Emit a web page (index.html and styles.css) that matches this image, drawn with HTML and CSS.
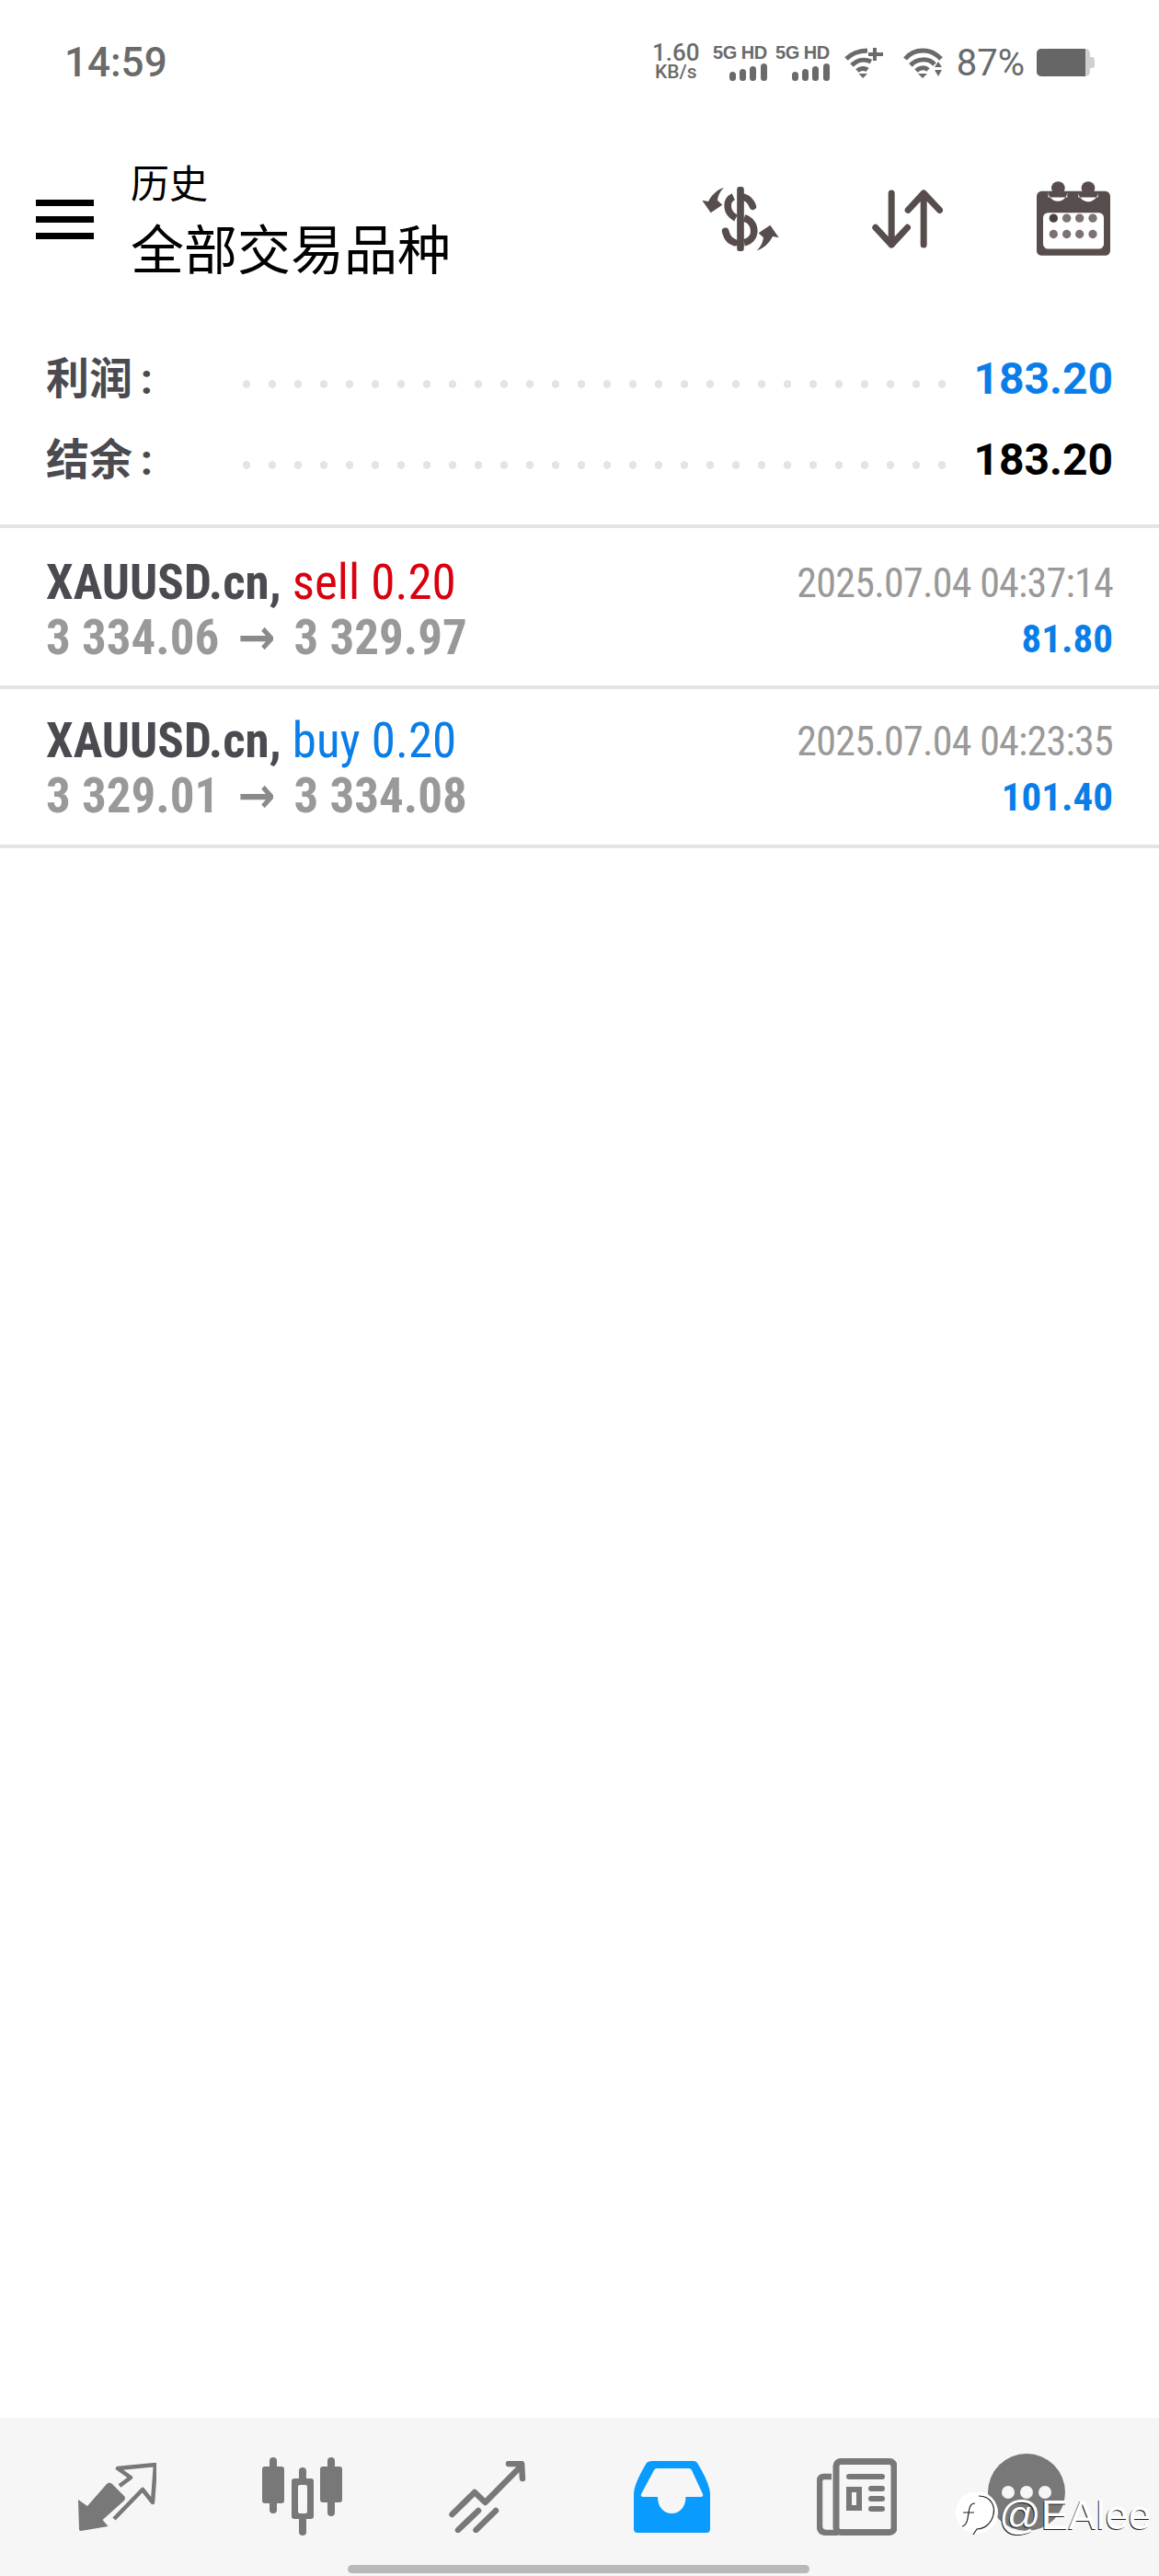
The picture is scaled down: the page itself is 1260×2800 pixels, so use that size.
FILE: index.html
```html
<!DOCTYPE html>
<html lang="zh">
<head>
    <meta charset="utf-8">
    <title>历史</title>
    <link rel="stylesheet" href="styles.css">
</head>
<body>

<div class="page">
    <!-- Status bar -->
    <div class="status">
        <span class="clock">14:59</span>
        <div class="status-right">
            <div class="speed"><b>1.60</b><span>KB/s</span></div>
            <div class="sim">
                <span>5G HD</span>
                <svg class="bars" viewBox="0 0 41 19"><rect x="0" y="9" width="7" height="10" rx="3.5"/><rect x="11" y="6" width="7" height="13" rx="3.5"/><rect x="22" y="3" width="7" height="16" rx="3.5"/><rect x="34" y="0" width="7" height="19" rx="3.5"/></svg>
            </div>
            <div class="sim">
                <span>5G HD</span>
                <svg class="bars" viewBox="0 0 41 19"><rect x="0" y="9" width="7" height="10" rx="3.5"/><rect x="11" y="6" width="7" height="13" rx="3.5"/><rect x="22" y="3" width="7" height="16" rx="3.5"/><rect x="34" y="0" width="7" height="19" rx="3.5"/></svg>
            </div>
            <svg class="wifi wifi-plus" viewBox="0 0 42 33">
                <g fill="none" stroke="#6a6a6a" stroke-width="5">
                    <path d="M2 12C8 6 14 3.500 25 3"/>
                    <path d="M8 19C14 13 22 11.500 29 15"/>
                    <path d="M14 25C17 22 22 21.500 25 24"/>
                </g>
                <path d="M15.500 28H25L20.200 33Z" fill="#6a6a6a"/>
                <path d="M33 0V14M26 7H42" fill="none" stroke="#6a6a6a" stroke-width="4"/>
            </svg>
            <svg class="wifi" viewBox="0 0 43 33">
                <g fill="none" stroke="#6a6a6a" stroke-width="5">
                    <path d="M2 12C12 0 30 0 41 12"/>
                    <path d="M8 19C15 11 28 11 34 18"/>
                    <path d="M14 25C18 21 24 21 27 24"/>
                </g>
                <path d="M16 28H26L21 33Z" fill="#6a6a6a"/>
                <path d="M38 15L42 21H34ZM34 24H42L38 31Z" fill="#6a6a6a"/>
            </svg>
            <span class="percent">87%</span>
            <svg class="battery" viewBox="0 0 63 30">
                <rect x="0" y="0" width="58" height="30" rx="5" fill="#cfcfcf"/>
                <path d="M5 0H53V30H5A5 5 0 0 1 0 25V5A5 5 0 0 1 5 0Z" fill="#666"/>
                <path d="M58 9H60A3 3 0 0 1 63 12V18A3 3 0 0 1 60 21H58Z" fill="#cfcfcf"/>
            </svg>
        </div>
    </div>

    <!-- Toolbar -->
    <header class="toolbar">
        <div class="burger"><i></i><i></i><i></i></div>
        <div class="titles">
            <div class="title-small">历史</div>
            <div class="title-big">全部交易品种</div>
        </div>
        <svg class="tool tool-dollar" viewBox="70 68 250 210">
            <g fill="none" stroke="#574d4d" stroke-width="23" stroke-linecap="round">
                <path d="M195 78V268"/>
                <path d="M172 100C146 112 146 152 180 170" stroke-linecap="butt"/>
                <path d="M207 102C220 106 230 118 235 132"/>
                <path d="M207 170C250 182 250 242 207 250" stroke-linecap="butt"/>
                <path d="M146 213C150 232 160 245 176 250"/>
            </g>
            <path d="M142 70C128 82 122 98 120 112L136 127L98 153L70 112L90 116C102 92 122 76 142 70Z" fill="#574d4d"/>
            <path d="M142 70C128 82 122 98 120 112L136 127L98 153L70 112L90 116C102 92 122 76 142 70Z" fill="#574d4d" transform="rotate(180 195 173)"/>
        </svg>
        <svg class="tool tool-sort" viewBox="625 78 230 192">
            <g fill="none" stroke="#574d4d" stroke-width="21" stroke-linecap="round" stroke-linejoin="round">
                <path d="M688 90V258M636 202L688 258L740 202"/>
                <path d="M793 258V90M742 145L793 90L845 145"/>
            </g>
        </svg>
        <svg class="tool tool-cal" viewBox="1162 48 240 242">
            <rect x="1162" y="80" width="240" height="210" rx="16" fill="#574d4d"/>
            <rect x="1183" y="150" width="198" height="118" rx="16" fill="#fff"/>
            <path d="M1200 80A30 30 0 0 0 1262 84V100H1200ZM1298 80A30 30 0 0 0 1362 84V100H1298Z" fill="#fff"/>
            <circle cx="1232" cy="70" r="22" fill="#574d4d"/>
            <circle cx="1330" cy="70" r="22" fill="#574d4d"/>
            <circle cx="1217" cy="168" r="14" fill="#4a4040"/>
            <g fill="#7d7272">
                <circle cx="1260" cy="168" r="14"/><circle cx="1302" cy="168" r="14"/><circle cx="1345" cy="168" r="14"/>
                <circle cx="1217" cy="220" r="14"/><circle cx="1260" cy="220" r="14"/><circle cx="1302" cy="220" r="14"/><circle cx="1345" cy="220" r="14"/>
            </g>
        </svg>
    </header>

    <!-- Totals -->
    <section class="summary">
        <div class="sum-row">
            <span class="sum-label">利润 :</span>
            <span class="sum-dots"></span>
            <span class="sum-value blue">183.20</span>
        </div>
        <div class="sum-row">
            <span class="sum-label">结余 :</span>
            <span class="sum-dots"></span>
            <span class="sum-value">183.20</span>
        </div>
    </section>

    <!-- Deals -->
    <section class="deals">
        <div class="deal">
            <div class="deal-left">
                <div class="deal-name"><b>XAUUSD.cn,</b> <span class="red">sell 0.20</span></div>
                <div class="deal-price">3 334.06 <span class="arrow">→</span> 3 329.97</div>
            </div>
            <div class="deal-right">
                <div class="deal-time">2025.07.04 04:37:14</div>
                <div class="deal-profit blue">81.80</div>
            </div>
        </div>
        <div class="deal deal-short">
            <div class="deal-left">
                <div class="deal-name"><b>XAUUSD.cn,</b> <span class="blue">buy 0.20</span></div>
                <div class="deal-price">3 329.01 <span class="arrow">→</span> 3 334.08</div>
            </div>
            <div class="deal-right">
                <div class="deal-time">2025.07.04 04:23:35</div>
                <div class="deal-profit blue">101.40</div>
            </div>
        </div>
    </section>

    <!-- Bottom navigation -->
    <nav class="tabs">
        <svg class="tab tab-trade" viewBox="86 77 85 75">
            <path d="M86 117L96 124L117 100Q120 97 123 100L136 113Q138 115 136 118L112.500 139L118.500 146L89 151Q87 151.500 87 149Z" fill="#787878"/>
            <path d="M131 102L143 93L129 83L170 79L167 120L156 106L125 138" fill="none" stroke="#787878" stroke-width="4.500" stroke-linejoin="round"/>
        </svg>
        <svg class="tab tab-candles" viewBox="285 71 87 86">
            <g fill="#787878">
                <rect x="293" y="71" width="8" height="61" rx="4"/><rect x="285" y="81" width="24" height="40" rx="3"/>
                <rect x="325" y="82" width="8" height="74" rx="4"/>
                <rect x="317" y="94" width="24" height="44" rx="3"/>
                <rect x="356" y="71" width="8" height="64" rx="4"/><rect x="348" y="81" width="24" height="39" rx="3"/>
            </g>
            <rect x="324" y="101" width="10" height="31" rx="2" fill="#f6f6f6"/>
        </svg>
        <svg class="tab tab-chart" viewBox="488 73 84 78">
            <g fill="none" stroke="#787878" stroke-width="6.500" stroke-linecap="round" stroke-linejoin="round">
                <path d="M491.500 131L516 107L527.500 118L567 78"/>
                <path d="M553 76H567L568 92"/>
                <path d="M520 127L498 148M539 127L517.500 148"/>
            </g>
        </svg>
        <svg class="tab tab-inbox" viewBox="689 73 85 78">
            <path d="M710 73H755Q758 73 759 75Q773 98 773 109V147Q773 151 769 151H694Q690 151 690 147V109Q690 98 704 75Q706 73 710 73Z" fill="#0a9bff"/>
            <path d="M715 81H750Q752 81 753 83L765 109Q766 112 763 112H746.500C746.500 136 716 136 716 112H700Q697 112 698 109L712 83Q713 81 715 81Z" fill="#f6f6f6"/>
        </svg>
        <svg class="tab tab-news" viewBox="889 70 87 84">
            <rect x="910" y="73.500" width="63" height="77" rx="5" fill="none" stroke="#787878" stroke-width="7"/>
            <path d="M905 90H897Q892 90 892 95V144Q892 151 900 151H912" fill="none" stroke="#787878" stroke-width="6.500"/>
            <rect x="921" y="87" width="42" height="6" rx="3" fill="#787878"/>
            <path fill-rule="evenodd" d="M921 101H938V127H921ZM927 107V121H932V107Z" fill="#787878"/>
            <rect x="945" y="100" width="18" height="6" rx="3" fill="#787878"/>
            <rect x="945" y="111" width="18" height="6" rx="3" fill="#787878"/>
            <rect x="945" y="122" width="18" height="6" rx="3" fill="#787878"/>
        </svg>
        <svg class="tab tab-more" viewBox="1075 66 84 84">
            <circle cx="1117" cy="108" r="42" fill="#787878"/>
            <circle cx="1097" cy="108" r="7" fill="#f6f6f6"/>
            <circle cx="1117" cy="108" r="7" fill="#f6f6f6"/>
            <circle cx="1137" cy="108" r="7" fill="#f6f6f6"/>
        </svg>
        <div class="watermark">
            <svg class="wm-logo" viewBox="0 0 48 50">
                <circle cx="24" cy="22" r="23" fill="#fff"/>
                <path d="M26 4C40 4 44 16 42 24C40 34 32 40 24 40L20 46" fill="none" stroke="#222" stroke-width="1.200"/>
                <path d="M22 12C17 12 16 16 15 22C14 30 13 36 8 37M9 22H21" fill="none" stroke="#222" stroke-width="1.200"/>
            </svg>
            <span class="wm-text">@EAlee</span>
        </div>
        <div class="home-bar"></div>
    </nav>
</div>

</body>
</html>
```

FILE: styles.css
```css
* {
    box-sizing: border-box;
}
body {
    margin: 0;
    background-color: #fff;
    font-family: Roboto, "Noto Sans CJK SC", sans-serif;
}
.page {
    width: 1260px;
    height: 2800px;
    display: flex;
    flex-direction: column;
}
.blue {
    color: #0a7ee8;
}
.red {
    color: #d9000f;
}

/* Status bar */
.status {
    height: 136px;
    padding: 0 70px;
    display: flex;
    justify-content: space-between;
    align-items: center;
    color: #6a6a6a;
}
.clock {
    font-size: 44px;
    font-weight: 500;
}
.status-right {
    display: flex;
    align-items: center;
}
.speed {
    width: 52px;
    margin-right: 5px;
    display: flex;
    flex-direction: column;
    align-items: center;
    line-height: 21px;
}
.speed b {
    font-size: 26px;
    font-weight: 500;
}
.speed span {
    font-size: 21px;
    font-weight: 500;
}
.sim {
    width: 56px;
    margin-left: 12px;
    display: flex;
    flex-direction: column;
    align-items: flex-end;
    gap: 3px;
}
.sim span {
    font-family: "Liberation Sans Narrow", "Liberation Sans", sans-serif;
    font-size: 20px;
    font-weight: 700;
    line-height: 17px;
    letter-spacing: -0.5px;
    white-space: nowrap;
}
.bars {
    width: 41px;
    height: 19px;
    fill: #6a6a6a;
}
.wifi {
    width: 43px;
    height: 33px;
    margin-left: 16px;
}
.wifi-plus {
    width: 42px;
}
.wifi-plus + .wifi {
    margin-left: 22px;
}
.percent {
    margin-left: 15px;
    font-size: 40px;
}
.battery {
    width: 63px;
    height: 30px;
    margin-left: 13px;
}

/* Toolbar */
.toolbar {
    height: 204px;
    padding-left: 39px;
    display: flex;
    align-items: center;
}
.burger {
    width: 63px;
    display: flex;
    flex-direction: column;
    gap: 11px;
}
.burger i {
    height: 7px;
    background-color: #000;
}
.titles {
    margin: 9px 0 0 40px;
    width: 621px;
}
.title-small {
    font-size: 42px;
    line-height: 60px;
}
.title-big {
    font-size: 58px;
    line-height: 84px;
}
.tool-dollar {
    width: 84px;
    height: 70px;
}
.tool-sort {
    width: 77px;
    height: 64px;
    margin-left: 101px;
}
.tool-cal {
    width: 80px;
    height: 81px;
    margin-left: 102px;
    margin-top: -2px;
}

/* Totals */
.summary {
    height: 230px;
    padding: 27px 50px 0;
}
.sum-row {
    height: 88px;
    display: flex;
    align-items: center;
}
.sum-label {
    flex: none;
    width: 204px;
    margin-top: -8px;
    font-size: 47px;
    font-weight: 700;
    word-spacing: -3px;
    color: #4a4a50;
}
.sum-dots {
    flex: none;
    width: 784px;
    height: 9px;
    margin-top: 12px;
    background-image: radial-gradient(circle, #e4e4e4 4px, transparent 4.5px);
    background-size: 28px 9px;
}
.sum-value {
    margin-left: auto;
    font-size: 48px;
    font-weight: 700;
}

/* Deals */
.deals {
    border-top: 4px solid #e4e4e4;
}
.deal {
    height: 175px;
    padding: 0 50px;
    border-bottom: 4px solid #e4e4e4;
    display: flex;
    justify-content: space-between;
    align-items: center;
}
.deal-short {
    height: 173px;
    padding-bottom: 4px;
}
.deal-left, .deal-right {
    font-family: "Roboto Condensed", "Liberation Sans Narrow", Roboto, sans-serif;
    font-stretch: condensed;
    white-space: nowrap;
}
.deal-left {
    padding-top: 6px;
}
.deal-right {
    padding-top: 8px;
    text-align: right;
}
.deal-name {
    font-size: 53px;
    line-height: 60px;
}
.deal-name b {
    color: #4a4a50;
}
.deal-price {
    font-size: 53px;
    line-height: 60px;
    font-weight: 700;
    color: #999;
}
.arrow {
    margin: 0 8px;
    font-family: "DejaVu Sans", sans-serif;
    font-size: 54px;
    line-height: 0;
    color: #8a8a8a;
}
.deal-time {
    font-size: 44px;
    line-height: 60px;
    letter-spacing: -0.75px;
    color: #999;
}
.deal-profit {
    font-size: 43px;
    line-height: 60px;
    font-weight: 700;
}

/* Bottom navigation */
.tabs {
    position: relative;
    margin-top: auto;
    height: 172px;
    padding-left: 27px;
    background-color: #f6f6f6;
    display: grid;
    grid-template-columns: repeat(5, 201px) 1fr;
    align-items: center;
    justify-items: center;
}
.tab-trade { width: 85px; height: 75px; }
.tab-candles { width: 87px; height: 86px; }
.tab-chart { width: 84px; height: 78px; }
.tab-inbox { width: 85px; height: 78px; }
.tab-news { width: 87px; height: 84px; }
.tab-more {
    width: 84px;
    height: 84px;
    justify-self: start;
    margin-left: 42px;
    margin-top: -10px;
}
.watermark {
    position: absolute;
    left: 1038px;
    top: 80px;
    display: flex;
    align-items: center;
}
.wm-logo {
    width: 48px;
    height: 50px;
}
.wm-text {
    font-family: "Liberation Sans", sans-serif;
    font-size: 45px;
    color: #fff;
    text-shadow: -1px 1px 0 #222;
}
.home-bar {
    position: absolute;
    left: 378px;
    bottom: 3px;
    width: 502px;
    height: 9px;
    border-radius: 5px;
    background-color: #b9b9b9;
}
```
